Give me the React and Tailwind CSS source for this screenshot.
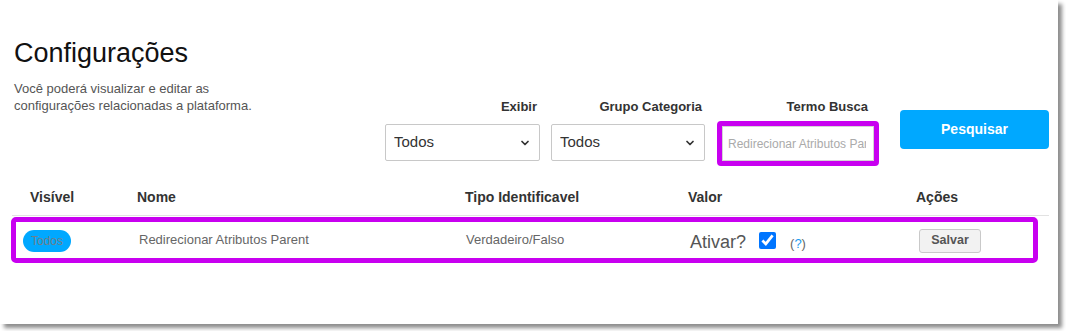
import React from "react";
import { ChevronDown } from "lucide-react";

const font = { fontFamily: '"Liberation Sans", Arial, sans-serif' };

const FilterSelect = ({ label, width }) => (
  <div className={`flex flex-col ${width}`}>
    <label className="text-[13px] leading-[16px] font-bold text-[#333] text-right pr-[3px]">
      {label}
    </label>
    <div className="relative mt-[9px]">
      <select
        defaultValue="Todos"
        className="w-full h-[37px] appearance-none border border-[#c8c8c8] rounded-[2px] bg-white pl-[8px] text-[15px] text-[#333] outline-none"
        style={font}
      >
        <option>Todos</option>
      </select>
      <ChevronDown
        size={12}
        strokeWidth={3.5}
        className="absolute right-[9px] top-[13px] text-[#333] pointer-events-none"
      />
    </div>
  </div>
);

const App = () => {
  return (
    <div className="w-[1066px] h-[331px] bg-white" style={font}>
      <div className="w-[1058px] h-[324px] bg-white shadow-[4px_4px_4px_rgba(0,0,0,0.45)] pt-[40px]">
        <div className="flex items-start">
          <div className="w-[371px] ml-[14px]">
            <h1 className="text-[27px] leading-[26px] text-[#111]">Configurações</h1>
            <p className="mt-[14px] text-[13px] leading-[17px] text-[#555] w-[250px]">
              Você poderá visualizar e editar as configurações relacionadas a plataforma.
            </p>
          </div>

          <div className="flex items-start mt-[59px]">
            <FilterSelect label="Exibir" width="w-[155px]" />
            <div className="ml-[11px]">
              <FilterSelect label="Grupo Categoria" width="w-[154px]" />
            </div>
            <div className="ml-[12px] flex flex-col w-[162px]">
              <label className="text-[13px] leading-[16px] font-bold text-[#333] text-right pr-[11px]">
                Termo Busca
              </label>
              <div className="mt-[6px] border-[5px] border-[#c800f0] rounded-[4px] h-[45px]">
                <input
                  readOnly
                  placeholder="Redirecionar Atributos Parent"
                  className="w-full h-full border border-[#d4d4d4] bg-white pl-[5px] pr-[7px] text-[12px] text-[#aaa] placeholder:text-[#aaa] outline-none"
                  style={font}
                />
              </div>
            </div>
            <button className="ml-[21px] mt-[11px] w-[149px] h-[39px] rounded-[4px] bg-[#00a8ff] text-white text-[14px] font-bold">
              Pesquisar
            </button>
          </div>
        </div>

        <div className="mt-[15px] ml-[12px] w-[1037px] border-b border-[#e2e2e2] pt-[8px] pb-[10px] pl-[18px] flex text-[14px] leading-[16px] font-bold text-[#333]">
          <div className="w-[107px]">Visível</div>
          <div className="w-[328px]">Nome</div>
          <div className="w-[223px]">Tipo Identificavel</div>
          <div className="w-[228px]">Valor</div>
          <div>Ações</div>
        </div>

        <div className="ml-[11px] mt-[1px] w-[1027px] h-[46px] border-[5px] border-[#c800f0] rounded-[5px] flex items-center pl-[7px]">
          <div className="w-[116px]">
            <span className="inline-flex items-center justify-center w-[48px] h-[22px] rounded-full bg-[#00a8ff] text-[12px] text-[#6f7f8a]">
              Todos
            </span>
          </div>
          <div className="w-[327px] text-[13px] text-[#666]">Redirecionar Atributos Parent</div>
          <div className="w-[224px] text-[13px] text-[#666]">Verdadeiro/Falso</div>
          <div className="w-[229px] flex items-center">
            <span className="text-[18px] text-[#555] mt-[4px]">Ativar?</span>
            <input type="checkbox" defaultChecked className="ml-[13px] m-0 w-[17px] h-[17px]" />
            <span className="ml-[14px] mt-[8px] text-[13px] text-[#666]">
              (<span className="text-[#1a9bf0]">?</span>)
            </span>
          </div>
          <button className="w-[62px] h-[24px] bg-[#f2f2f2] border border-[#c9c9c9] rounded-[3px] text-[12.5px] font-bold text-[#555] mt-[1px]">
            Salvar
          </button>
        </div>
      </div>
    </div>
  );
};

export default App;
